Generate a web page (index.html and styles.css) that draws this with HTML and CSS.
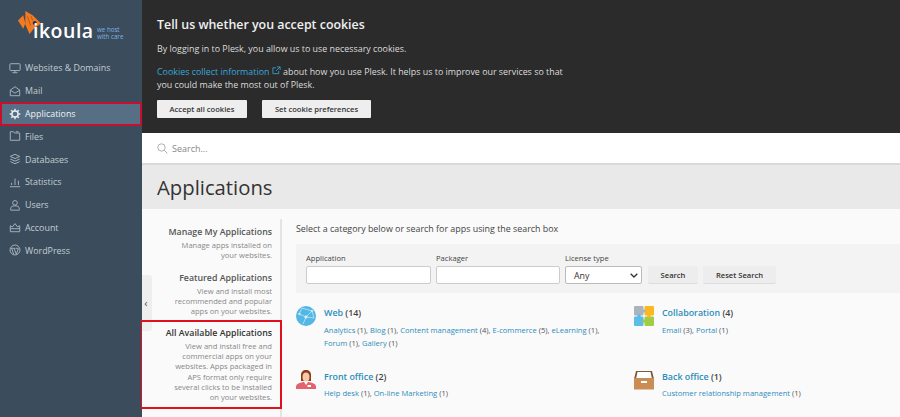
FILE: index.html
```html
<!DOCTYPE html>
<html lang="en">
<head>
<meta charset="utf-8">
<title>Applications</title>
<link rel="stylesheet" href="styles.css">
</head>
<body>
<div class="page">
  <aside class="sidebar">
    <div class="logo">
      <svg class="fish" width="23" height="23" viewBox="0 0 22 22"><path d="M0 9L5 4l2 8-2 5z" fill="#f47a20"/><path d="M7 0l7 4 8 8-7 5-4 5-4-9z" fill="#f47a20"/><path d="M9 5l3 9M12.500 5l1.500 4" stroke="#b9580f" stroke-width=".9" fill="none"/><circle cx="16" cy="11.500" r="2" fill="#25305a"/></svg>
      <span class="logo-word">ikoula</span>
      <span class="logo-tag">we host<br>with care</span>
    </div>
    <nav class="nav">
      <a class="nav-item"><svg class="ni" viewBox="0 0 14 14"><rect x="1" y="2" width="12" height="8" rx="1"/><path d="M4 12.500h6M7 10v2.500"/></svg>Websites &amp; Domains</a>
      <a class="nav-item"><svg class="ni" viewBox="0 0 14 14"><path d="M1.500 6L7 2l5.500 4v6.500h-11zM1.500 6L7 9.500 12.500 6"/></svg>Mail</a>
      <a class="nav-item active"><svg class="ni gear" viewBox="0 0 14 14"><circle cx="7" cy="7" r="3.600"/><path d="M7 .8v2.600M7 10.600v2.600M.8 7h2.600M10.600 7h2.600M2.600 2.600l1.800 1.800M9.600 9.600l1.800 1.800M2.600 11.400l1.800-1.800M9.600 4.400l1.800-1.800"/></svg>Applications</a>
      <a class="nav-item"><svg class="ni" viewBox="0 0 14 14"><path d="M1.500 2h4l1 1.500h6v8.500h-11zM8 2h3"/></svg>Files</a>
      <a class="nav-item"><svg class="ni" viewBox="0 0 14 14"><path d="M7 1.500l5.500 2.500L7 6.500 1.500 4zM1.500 7L7 9.500 12.500 7M1.500 10L7 12.500 12.500 10"/></svg>Databases</a>
      <a class="nav-item"><svg class="ni" viewBox="0 0 14 14"><path d="M1 12.500h12M3 10.500V8M7 10.500V3M11 10.500V5.500"/></svg>Statistics</a>
      <a class="nav-item"><svg class="ni" viewBox="0 0 14 14"><circle cx="7" cy="4.500" r="2.700"/><path d="M2 13v-2c0-2 2-3 5-3s5 1 5 3v2z"/></svg>Users</a>
      <a class="nav-item"><svg class="ni" viewBox="0 0 14 14"><path d="M1.500 5.500L4 7l3-4 3 4 2.500-1.500v7h-11zM1.500 9h11"/></svg>Account</a>
      <a class="nav-item"><svg class="ni" viewBox="0 0 14 14"><circle cx="7" cy="7" r="5.800"/><path d="M3 5l2.500 7M6 5l2.500 7L11 5M2.500 5h4M7.500 5h3"/></svg>WordPress</a>
    </nav>
  </aside>
  <main class="main">
    <section class="cookies">
      <h2 class="cookies-title">Tell us whether you accept cookies</h2>
      <p class="cookies-text">By logging in to Plesk, you allow us to use necessary cookies.</p>
      <p class="cookies-text cookies-info"><a class="cookies-link">Cookies collect information <svg class="ext" width="9" height="9" viewBox="0 0 10 10"><path d="M7.500 5.500v3h-6.500V2h3.500M5.500 1h3.500v3.500M9 1L4.500 5.500"/></svg></a> about how you use Plesk. It helps us to improve our services so that you could make the most out of Plesk.</p>
      <div class="cookies-actions">
        <button class="cookie-btn btn-accept">Accept all cookies</button>
        <button class="cookie-btn btn-prefs">Set cookie preferences</button>
      </div>
    </section>
    <div class="searchbar">
      <svg class="search-icon" width="11" height="11" viewBox="0 0 14 14"><circle cx="5.700" cy="5.700" r="4.700"/><path d="M9.200 9.200l4 4"/></svg>
      <span class="search-text">Search...</span>
    </div>
    <header class="page-head"><h1 class="page-title">Applications</h1></header>
    <div class="content">
      <div class="side-col">
        <div class="collapse-handle"><span class="chev">‹</span></div>
        <div class="side-item first">
          <h3 class="side-title">Manage My Applications</h3>
          <p class="side-text">Manage apps installed on<br>your websites.</p>
        </div>
        <div class="side-item">
          <h3 class="side-title">Featured Applications</h3>
          <p class="side-text">View and install most<br>recommended and popular<br>apps on your websites.</p>
        </div>
        <div class="side-item selected">
          <h3 class="side-title">All Available Applications</h3>
          <p class="side-text">View and install free and<br>commercial apps on your<br>websites. Apps packaged in<br>APS format only require<br>several clicks to be installed<br>on your websites.</p>
        </div>
      </div>
      <div class="main-col">
        <p class="lead">Select a category below or search for apps using the search box</p>
        <form class="filters">
          <label class="field"><span class="field-label">Application</span><input class="text-input" type="text"></label>
          <label class="field"><span class="field-label">Packager</span><input class="text-input narrow" type="text"></label>
          <label class="field"><span class="field-label">License type</span>
            <span class="select"><span>Any</span><svg width="8" height="5" viewBox="0 0 8 5"><path d="M.7.7L4 4 7.300.7" fill="none" stroke="#333" stroke-width="1.300"/></svg></span>
          </label>
          <button type="button" class="flt-btn">Search</button>
          <button type="button" class="flt-btn reset">Reset Search</button>
        </form>
        <div class="cats">
          <div class="cat">
            <svg class="cat-icon" viewBox="0 0 20 20"><circle cx="10" cy="10" r="10" fill="#53b6e4"/><g stroke="#bfe6f8" stroke-width=".8" fill="#e6f6fd"><path d="M3 8L10 11 16 5 M10 11L7 18 M10 11L18 12 M6 2L3 8M6 2L16 5M16 5L18 12" fill="none"/><circle cx="10" cy="11" r="1.300"/><circle cx="3.500" cy="8" r=".9"/><circle cx="16" cy="5" r=".9"/></g></svg>
            <div>
              <div class="cat-head"><a class="cat-name">Web</a> (14)</div>
              <div class="cat-links"><a>Analytics</a> (1), <a>Blog</a> (1), <a>Content management</a> (4), <a>E-commerce</a> (5), <a>eLearning</a> (1),<br><a>Forum</a> (1), <a>Gallery</a> (1)</div>
            </div>
          </div>
          <div class="cat">
            <svg class="cat-icon" viewBox="0 0 20 20"><rect x="0" y="0" width="9.500" height="9.500" rx="1" fill="#a9b4bd"/><rect x="10.500" y="0" width="9.500" height="9.500" rx="1" fill="#fbb81f"/><rect x="0" y="10.500" width="9.500" height="9.500" rx="1" fill="#5cbcea"/><rect x="10.500" y="10.500" width="9.500" height="9.500" rx="1" fill="#a0cd45"/><circle cx="10" cy="5" r="1.800" fill="#a9b4bd"/><circle cx="5" cy="10" r="1.800" fill="#5cbcea"/><circle cx="15" cy="10" r="1.800" fill="#fbb81f"/><circle cx="10" cy="15" r="1.800" fill="#a0cd45"/></svg>
            <div>
              <div class="cat-head"><a class="cat-name">Collaboration</a> (4)</div>
              <div class="cat-links"><a>Email</a> (3), <a>Portal</a> (1)</div>
            </div>
          </div>
          <div class="cat">
            <svg class="cat-icon" viewBox="0 0 20 20"><path d="M0 19v-2c0-3 3-4 7-5h6c4 1 7 2 7 5v2z" fill="#e2626e"/><path d="M5 5c0-3 2-5 5-5s5 2 5 5v6H5z" fill="#8a3b1c"/><ellipse cx="10" cy="7" rx="3.500" ry="4.500" fill="#f7c9a8"/><path d="M8 12h4l-2 3z" fill="#fff"/><rect x="11.500" y="15" width="3.500" height="2" fill="#fff"/></svg>
            <div>
              <div class="cat-head"><a class="cat-name">Front office</a> (2)</div>
              <div class="cat-links"><a>Help desk</a> (1), <a>On-line Marketing</a> (1)</div>
            </div>
          </div>
          <div class="cat">
            <svg class="cat-icon" viewBox="0 0 20 20"><path d="M2 1h16l2 8v10H0V9z" fill="#7d5a3c"/><path d="M3.500 2h13l1.500 7H2z" fill="#fff"/><rect y="8" width="20" height="11.500" fill="#c98d55"/><rect x="7" y="11" width="6" height="2" fill="#fff"/></svg>
            <div>
              <div class="cat-head"><a class="cat-name">Back office</a> (1)</div>
              <div class="cat-links"><a>Customer relationship management</a> (1)</div>
            </div>
          </div>
        </div>
      </div>
    </div>
  </main>
</div>
</body>
</html>
```

FILE: styles.css
```css
* { box-sizing: border-box; }
html, body { margin: 0; padding: 0; height: 100%; overflow: hidden; }
body { font-family: "Open Sans", sans-serif; font-size: 9px; color: #333; background: #fafafa; }
.page { display: flex; height: 417px; width: 900px; overflow: hidden; }
a { color: inherit; text-decoration: none; }
h1, h2, h3, p { margin: 0; font-weight: normal; }

.sidebar { width: 142px; flex: none; background: #3b4c5c; }
.logo { height: 56.500px; position: relative; }
.fish { position: absolute; left: 18px; top: 11px; }
.logo-word { position: absolute; left: 33px; top: 18px; font: 600 19.500px/26px "Open Sans", sans-serif; color: #fff; letter-spacing: .5px; }
.logo-tag { position: absolute; left: 97px; top: 26px; font-size: 6.200px; line-height: 7px; color: #7fb2e0; white-space: nowrap; }
.nav { display: flex; flex-direction: column; }
.nav-item { display: flex; align-items: center; gap: 4px; height: 22.800px; padding-left: 9px; font-size: 8.900px; color: #c3ccd3; }
.ni { width: 12px; height: 12px; flex: none; fill: none; stroke: #a9b5bf; stroke-width: 1.100; }
.nav-item.active { background: #566f84; color: #eef2f5; outline: 2px solid #c8102e; outline-offset: -2px; height: 24px; margin: -.5px 0 -.7px; }
.gear { stroke: #e8edf0; stroke-width: 1.700; }

.main { flex: 1; min-width: 0; display: flex; flex-direction: column; }
.cookies { height: 133px; background: #2b2b2b; color: #dcdcdc; padding: 16px 0 0 15px; }
.cookies-title { font-size: 12.400px; line-height: 18px; font-weight: 600; color: #f0f0f0; }
.cookies-text { font-size: 8.900px; line-height: 13px; margin-top: 8px; }
.cookies-info { width: 415px; margin-top: 10px; }
.cookies-link { color: #39a7db; }
.ext { vertical-align: baseline; fill: none; stroke: #39a7db; stroke-width: .9; }
.cookies-actions { display: flex; gap: 15px; margin-top: 9px; }
.cookie-btn { height: 18px; padding: 0; border: 0; border-radius: 1px; background: #eeeeee; color: #333; font: 600 7.600px "Open Sans", sans-serif; }
.btn-accept { width: 90px; }
.btn-prefs { width: 109px; }

.searchbar { height: 32px; background: #fff; border-bottom: 2px solid #d9d9d9; display: flex; align-items: center; padding-left: 15px; gap: 4px; }
.search-icon { fill: none; stroke: #aaa; stroke-width: 1.200; }
.search-text { color: #888; font-size: 9px; }
.page-head { height: 44px; background: #e9e9e9; padding-left: 15px; }
.page-title { font-size: 20.300px; line-height: 45px; color: #333; }

.content { flex: 1; display: flex; min-height: 0; }
.side-col { width: 138px; flex: none; padding-top: 10px; position: relative; }
.side-item { text-align: right; padding: 0 8px 0 8px; position: relative; white-space: nowrap; }
.first { padding-top: 7px; }
.side-item + .side-item { margin-top: 11.500px; }
.side-title { font-size: 8.800px; line-height: 13px; font-weight: 600; color: #555; }
.side-text { font-size: 7.600px; line-height: 10.200px; color: #888; margin-top: 1px; }
.side-item.selected { border: 2px solid #e0101e; border-left-width: 1px; margin: 3.500px -2px 0 -1px; padding: 5px 8px 0 8px; height: 89px; z-index: 1; }
.selected .side-title { color: #333; }
.collapse-handle { position: absolute; left: 0; top: 66px; width: 10px; height: 56px; background: #eeeeee; border-radius: 0 3px 3px 0; display: flex; align-items: center; justify-content: center; color: #555; }
.chev { font-size: 11px; line-height: 12px; margin-right: 2px; }

.main-col { flex: 1; min-width: 0; border-left: 2px solid #e4e4e4; margin-top: 10px; padding: 3px 0 0 14px; }
.lead { font-size: 8.900px; line-height: 14px; color: #444; }
.filters { display: flex; align-items: flex-end; margin-top: 8px; height: 49px; background: #f3f3f3; padding: 0 0 9px 10px; }
.field { display: flex; flex-direction: column; margin-right: 5px; }
.field-label { font-size: 7.600px; line-height: 13px; color: #444; margin-bottom: 1px; }
.text-input { width: 125px; height: 18px; border: 1px solid #ccc; border-radius: 2px; background: #fff; padding: 0; }
.narrow { width: 124px; }
.select { width: 77px; height: 18px; border: 1px solid #bbb; border-radius: 2px; background: #fff; display: flex; align-items: center; justify-content: space-between; padding: 0 3px 0 8px; font-size: 8.900px; color: #333; }
.flt-btn { height: 18px; width: 50px; padding: 0; border: 0; border-bottom: 1px solid #ddd; border-radius: 2px; background: #ededed; color: #333; font: 600 7.600px "Open Sans", sans-serif; margin-left: 1px; margin-right: 4px; }
.reset { width: 73px; }

.cats { display: grid; grid-template-columns: 338px 1fr; grid-auto-rows: 63.500px; margin-top: 13px; }
.cat { display: flex; gap: 8px; }
.cat-icon { width: 20px; height: 20px; flex: none; }
.cat-head { font-size: 8.900px; line-height: 14px; font-weight: 600; color: #444; }
.cat-name { color: #2a8dbb; }
.cat-links { font-size: 7.600px; line-height: 13px; color: #555; margin-top: 3.500px; white-space: nowrap; }
.cat-links a { color: #2a8dbb; }
```
